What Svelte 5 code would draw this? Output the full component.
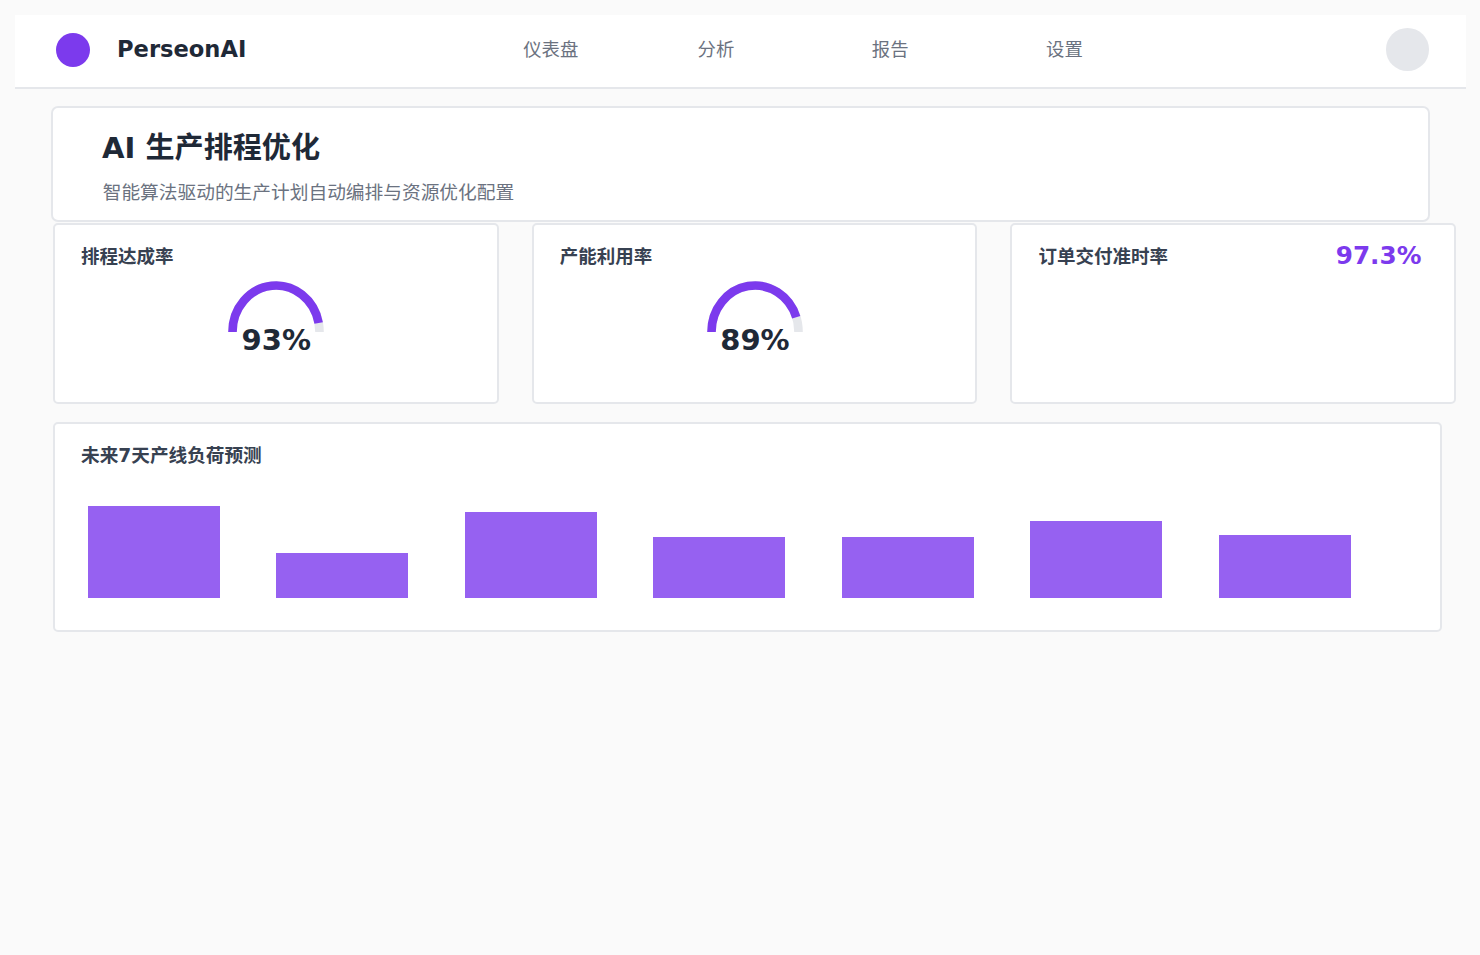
<script lang="ts">

    interface Gauge {
        title: string;
        value: number;
    }

    const links = ['仪表盘', '分析', '报告', '设置'];

    const gauges: Gauge[] = [
        { title: '排程达成率', value: 93 },
        { title: '产能利用率', value: 89 }
    ];

    // bar heights in px
    const loads = [92, 45, 86, 61, 61, 77, 63];

    const rx = 43.5;
    const ry = 46.5;

    function arc(percent: number) {
        const angle = Math.PI * Math.max(0, 1 - percent * 1.008 / 100);
        const x = 48 + rx * Math.cos(angle);
        const y = 51 - ry * Math.sin(angle);
        return `M${48 - rx} 51 A${rx} ${ry} 0 0 1 ${x} ${y}`;
    }

</script>

<main>

    <header>
        <div class="logo"></div>
        <span class="brand">PerseonAI</span>
        <nav>
            {#each links as link}
                <span class="link">{link}</span>
            {/each}
        </nav>
        <div class="avatar"></div>
    </header>

    <section class="hero">
        <h1>AI 生产排程优化</h1>
        <p>智能算法驱动的生产计划自动编排与资源优化配置</p>
    </section>

    <section class="cards">
        {#each gauges as gauge}
            <div class="card">
                <h2>{gauge.title}</h2>
                <div class="gauge">
                    <svg width="96" height="51" viewBox="0 0 96 51">
                        <path d={arc(100)} fill="none" stroke="#e5e7eb" stroke-width="8.6" />
                        <path d={arc(gauge.value)} fill="none" stroke="#7c3aed" stroke-width="8.6" />
                    </svg>
                    <span class="percent">{gauge.value}%</span>
                </div>
            </div>
        {/each}
        <div class="card row">
            <h2>订单交付准时率</h2>
            <span class="rate">97.3%</span>
        </div>
    </section>

    <section class="panel">
        <h2>未来7天产线负荷预测</h2>
        <div class="bars">
            {#each loads as load}
                <div class="bar" style="height: {load}px"></div>
            {/each}
        </div>
    </section>

</main>

<style>

    :global(body) {
        background: #fafafa;
    }

    main {
        box-sizing: border-box;
        width: 1480px;
        height: 955px;
        padding: 15px 14px 0 15px;
        overflow: hidden;
        font-family: "DejaVu Sans", "Noto Sans CJK SC", sans-serif;
        color: #1f2937;
    }

    h1, h2, p {
        margin: 0;
    }

    header {
        box-sizing: border-box;
        display: flex;
        align-items: center;
        height: 74px;
        padding: 0 37px 2px 40.5px;
        background: #fff;
        border-bottom: 2px solid #e5e7eb;
    }

    .logo {
        width: 34.5px;
        height: 34.5px;
        border-radius: 50%;
        background: #7c3aed;
    }

    .brand {
        width: 406.2px;
        margin-left: 27px;
        padding-bottom: 2px;
        font-size: 22.6px;
        font-weight: bold;
        line-height: 28px;
    }

    nav {
        display: flex;
        flex: 1;
    }

    .link {
        width: 174.3px;
        font-size: 18.4px;
        line-height: 28px;
        color: #6b7280;
    }

    .avatar {
        width: 43.5px;
        height: 43px;
        margin-bottom: 1px;
        border-radius: 50%;
        background: #e5e7eb;
    }

    .hero {
        box-sizing: border-box;
        width: 1379px;
        height: 116px;
        margin: 17px 0 0 36px;
        padding: 20px 49px;
        background: #fff;
        border: 2px solid #e5e7eb;
        border-radius: 7px;
    }

    h1 {
        font-size: 29.1px;
        line-height: 41px;
    }

    .hero p {
        margin: 9px 0 0 0.7px;
        font-size: 18.72px;
        line-height: 29px;
        color: #6b7280;
    }

    .cards {
        display: flex;
        gap: 33.2px;
        margin: 1px 0 0 38px;
    }

    .card {
        box-sizing: border-box;
        flex: none;
        width: 445.5px;
        height: 181px;
        padding: 18px 32.5px 0 26px;
        background: #fff;
        border: 2px solid #e5e7eb;
        border-radius: 5px;
    }

    .row {
        display: flex;
        justify-content: space-between;
    }

    h2 {
        font-size: 18.5px;
        line-height: 28px;
        color: #374151;
    }

    .gauge {
        display: flex;
        flex-direction: column;
        align-items: center;
        margin: 10px 0 0 7.5px;
    }

    .gauge svg {
        display: block;
    }

    .percent {
        margin-top: -9px;
        font-size: 29px;
        font-weight: bold;
        line-height: 34px;
    }

    .rate {
        font-size: 24.7px;
        font-weight: bold;
        line-height: 26px;
        color: #7c3aed;
    }

    .panel {
        box-sizing: border-box;
        width: 1389px;
        height: 210px;
        margin: 18px 0 0 38px;
        padding: 18px 26px 0;
        background: #fff;
        border: 2px solid #e5e7eb;
        border-radius: 5px;
    }

    .panel h2 {
        font-size: 18.65px;
    }

    .bars {
        display: flex;
        align-items: flex-end;
        gap: 56.45px;
        height: 128px;
        margin-left: 7px;
    }

    .bar {
        flex: none;
        width: 132px;
        background: #9661f1;
    }

</style>
